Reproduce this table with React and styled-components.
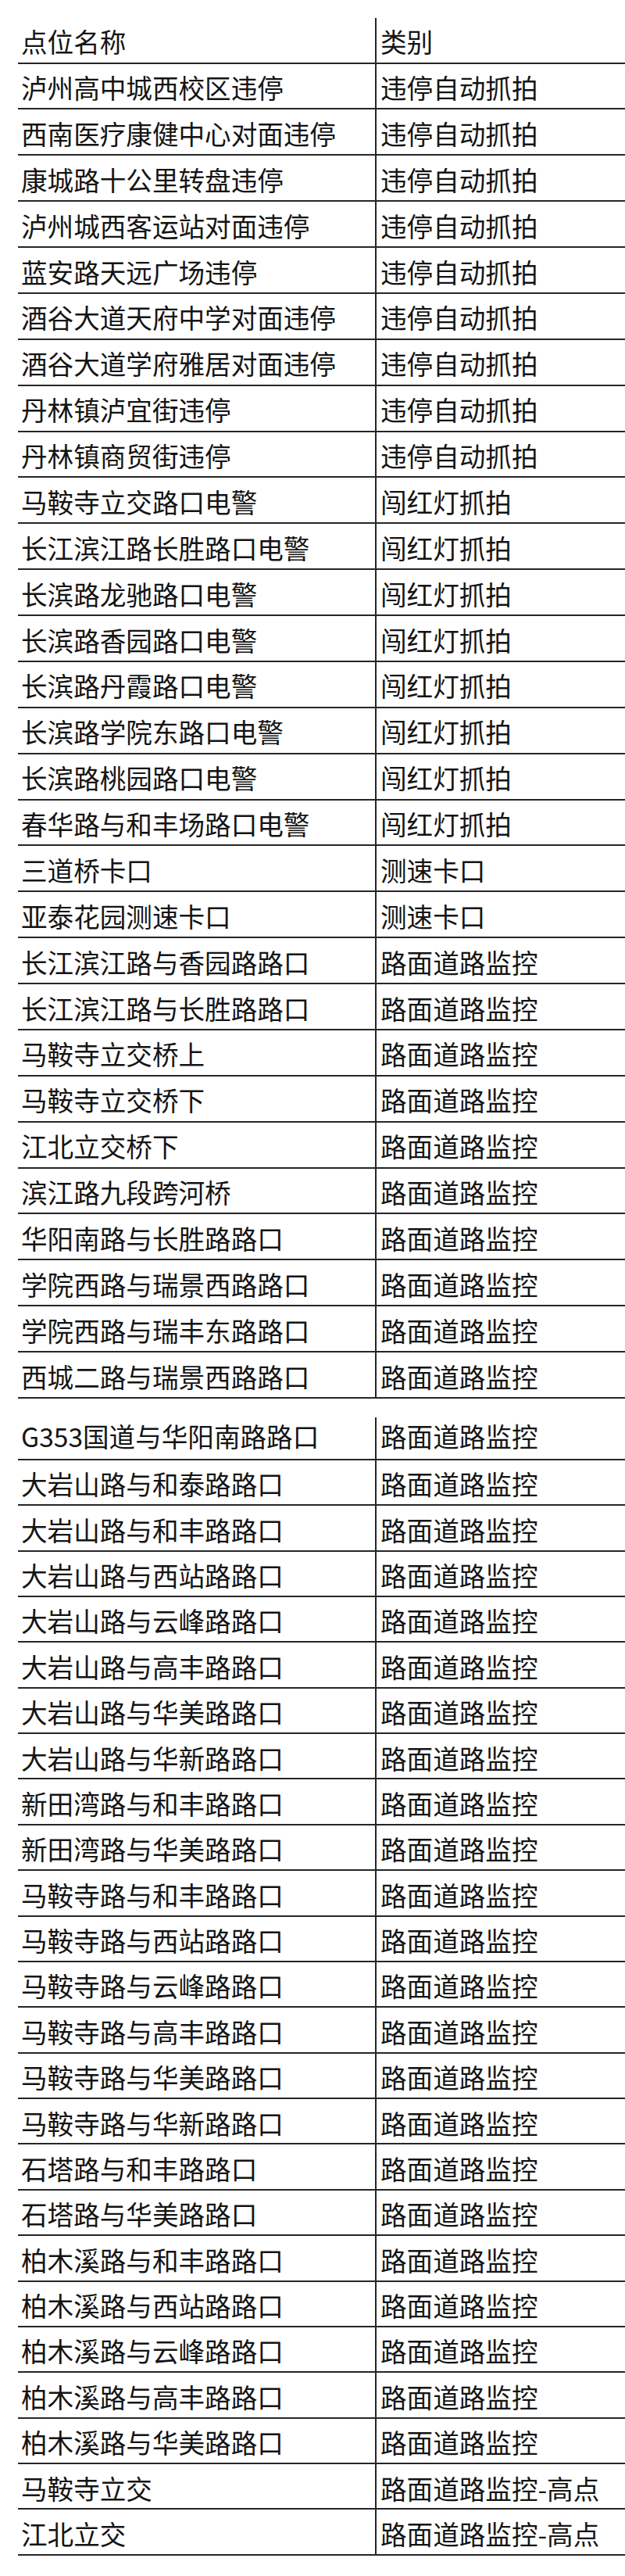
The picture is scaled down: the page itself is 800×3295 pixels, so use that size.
import React from "react";
import styled, { createGlobalStyle } from "styled-components";

const GlobalStyle = createGlobalStyle`
  html, body {
    margin: 0;
    padding: 0;
    background: #ffffff;
  }
  body {
    font-family: "Noto Sans CJK SC", "Noto Sans", sans-serif;
    color: #141414;
  }
`;

const Page = styled.div`
  display: flex;
  flex-direction: column;
  padding: 23px 0 0 23px;
  width: 800px;
  box-sizing: border-box;
`;

const Table = styled.div`
  display: flex;
  flex-direction: column;
  width: 777px;
  margin-top: ${(p) => p.$gap || 0}px;
`;

const Row = styled.div`
  display: grid;
  grid-template-columns: 459px 1fr;
  height: ${(p) => p.$h}px;
  box-sizing: border-box;
  border-bottom: 2px solid #262626;
`;

const Cell = styled.div`
  display: flex;
  align-items: flex-start;
  box-sizing: border-box;
  padding-top: ${(p) => p.$pt}px;
  padding-left: ${(p) => (p.$right ? 5 : 4)}px;
  font-size: 33.6px;
  line-height: 1;
  white-space: nowrap;
  overflow: hidden;
  color: #141414;
  border-right: ${(p) => (p.$right ? "none" : "2px solid #262626")};
`;

const table1 = [
  ["泸州高中城西校区违停", "违停自动抓拍"],
  ["西南医疗康健中心对面违停", "违停自动抓拍"],
  ["康城路十公里转盘违停", "违停自动抓拍"],
  ["泸州城西客运站对面违停", "违停自动抓拍"],
  ["蓝安路天远广场违停", "违停自动抓拍"],
  ["酒谷大道天府中学对面违停", "违停自动抓拍"],
  ["酒谷大道学府雅居对面违停", "违停自动抓拍"],
  ["丹林镇泸宜街违停", "违停自动抓拍"],
  ["丹林镇商贸街违停", "违停自动抓拍"],
  ["马鞍寺立交路口电警", "闯红灯抓拍"],
  ["长江滨江路长胜路口电警", "闯红灯抓拍"],
  ["长滨路龙驰路口电警", "闯红灯抓拍"],
  ["长滨路香园路口电警", "闯红灯抓拍"],
  ["长滨路丹霞路口电警", "闯红灯抓拍"],
  ["长滨路学院东路口电警", "闯红灯抓拍"],
  ["长滨路桃园路口电警", "闯红灯抓拍"],
  ["春华路与和丰场路口电警", "闯红灯抓拍"],
  ["三道桥卡口", "测速卡口"],
  ["亚泰花园测速卡口", "测速卡口"],
  ["长江滨江路与香园路路口", "路面道路监控"],
  ["长江滨江路与长胜路路口", "路面道路监控"],
  ["马鞍寺立交桥上", "路面道路监控"],
  ["马鞍寺立交桥下", "路面道路监控"],
  ["江北立交桥下", "路面道路监控"],
  ["滨江路九段跨河桥", "路面道路监控"],
  ["华阳南路与长胜路路口", "路面道路监控"],
  ["学院西路与瑞景西路路口", "路面道路监控"],
  ["学院西路与瑞丰东路路口", "路面道路监控"],
  ["西城二路与瑞景西路路口", "路面道路监控"],
];

const table2 = [
  ["G353国道与华阳南路路口", "路面道路监控"],
  ["大岩山路与和泰路路口", "路面道路监控"],
  ["大岩山路与和丰路路口", "路面道路监控"],
  ["大岩山路与西站路路口", "路面道路监控"],
  ["大岩山路与云峰路路口", "路面道路监控"],
  ["大岩山路与高丰路路口", "路面道路监控"],
  ["大岩山路与华美路路口", "路面道路监控"],
  ["大岩山路与华新路路口", "路面道路监控"],
  ["新田湾路与和丰路路口", "路面道路监控"],
  ["新田湾路与华美路路口", "路面道路监控"],
  ["马鞍寺路与和丰路路口", "路面道路监控"],
  ["马鞍寺路与西站路路口", "路面道路监控"],
  ["马鞍寺路与云峰路路口", "路面道路监控"],
  ["马鞍寺路与高丰路路口", "路面道路监控"],
  ["马鞍寺路与华美路路口", "路面道路监控"],
  ["马鞍寺路与华新路路口", "路面道路监控"],
  ["石塔路与和丰路路口", "路面道路监控"],
  ["石塔路与华美路路口", "路面道路监控"],
  ["柏木溪路与和丰路路口", "路面道路监控"],
  ["柏木溪路与西站路路口", "路面道路监控"],
  ["柏木溪路与云峰路路口", "路面道路监控"],
  ["柏木溪路与高丰路路口", "路面道路监控"],
  ["柏木溪路与华美路路口", "路面道路监控"],
  ["马鞍寺立交", "路面道路监控-高点"],
  ["江北立交", "路面道路监控-高点"],
];

function DataRow({ name, type, h, pt }) {
  return (
    <Row $h={h}>
      <Cell $pt={pt}>{name}</Cell>
      <Cell $pt={pt} $right>
        {type}
      </Cell>
    </Row>
  );
}

export default function App() {
  return (
    <>
      <GlobalStyle />
      <Page>
        <Table>
          <DataRow name="点位名称" type="类别" h={58.5} pt={13} />
          {table1.map(([n, t], i) => (
            <DataRow key={i} name={n} type={t} h={58.89} pt={13.5} />
          ))}
        </Table>
        <Table $gap={23.7}>
          {table2.map(([n, t], i) => (
            <DataRow
              key={i}
              name={n}
              type={t}
              h={i === 0 ? 55.3 : 58.38}
              pt={i === 0 ? 7 : 13.5}
            />
          ))}
        </Table>
      </Page>
    </>
  );
}
